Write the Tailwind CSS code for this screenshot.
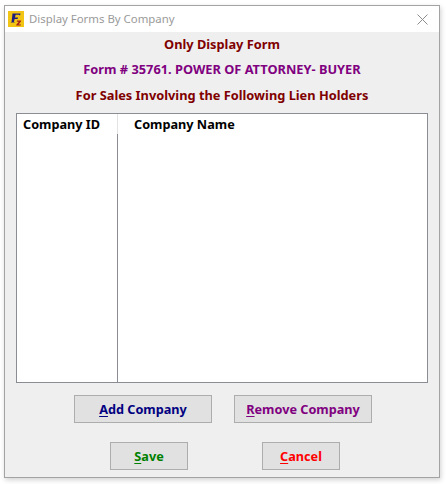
<!DOCTYPE html>
<html lang="en">
<head>
    <meta charset="UTF-8">
    <title>Display Forms By Company</title>
    <script src="https://cdn.jsdelivr.net/npm/@tailwindcss/browser@4"></script>
</head>
<body class="bg-white w-[446px] h-[484px] overflow-hidden pl-[4px] pt-[5px] font-['Noto_Sans',sans-serif]">
    <div class="w-[436px] h-[473px] border border-[#a3a3a3] bg-[#efefef] flex flex-col shadow-[1px_2px_5px_rgba(0,0,0,0.18)]">
        <!-- Title bar -->
        <div class="h-[26px] bg-white flex items-center pl-[3px] pr-[11px] shrink-0">
            <svg class="w-4 h-4 shrink-0" viewBox="0 0 16 16">
                <rect width="16" height="16" fill="#f2c414"/>
                <path d="M4.5 2.5H12.5L12 4.6L10.8 3.8H7.6L7 6.4H10L9.6 8H6.6L5.9 10.8L6.9 11.6H2.6L3.6 10.8Z" fill="#1c1c80"/>
                <path d="M9 9.6H13.2L13 10.6L10.6 13.4H13L12.6 14.6H8.2L8.4 13.6L10.9 10.8H8.8Z" fill="#a81c1c"/>
            </svg>
            <span class="ml-[5px] text-[11.4px] leading-none text-[#9a9a9a]">Display Forms By Company</span>
            <svg class="w-[11px] h-[11px] ml-auto" viewBox="0 0 11 11">
                <path d="M.5.5L10.5 10.5M10.5.5L.5 10.5" stroke="#8c8c8c" stroke-width="1" fill="none"/>
            </svg>
        </div>

        <!-- Headings -->
        <div class="flex flex-col items-center font-bold text-[12.8px] leading-[16px] pt-[4px] shrink-0">
            <h1 class="h-[25px] text-[#800000]">Only Display Form</h1>
            <h2 class="h-[26px] text-[#800080]">Form # 35761. POWER OF ATTORNEY- BUYER</h2>
            <h2 class="h-[16px] text-[#800000]">For Sales Involving the Following Lien Holders</h2>
        </div>

        <!-- List -->
        <div class="w-[412px] h-[270px] ml-[11px] mt-[10px] bg-white border border-[#8a8d94] flex flex-col shrink-0">
            <div class="flex h-[20px] shrink-0 text-[12.7px] font-bold leading-[21px] text-black">
                <div class="w-[101px] pl-[6px] border-r border-[#e3e3e3]">Company ID</div>
                <div class="pl-[16px]">Company Name</div>
            </div>
            <div class="flex-1 w-[101px] border-r border-[#8a8d94]"></div>
        </div>

        <!-- Buttons -->
        <div class="flex gap-[22px] mt-[12px] ml-[69px] shrink-0 font-bold text-[12.7px]">
            <button class="w-[138px] h-[28px] pt-[1px] bg-[#e1e1e1] border border-[#adadad] text-[#000080]"><span class="underline underline-offset-2">A</span>dd Company</button>
            <button class="w-[138px] h-[28px] pt-[1px] bg-[#e1e1e1] border border-[#adadad] text-[#800080]"><span class="underline underline-offset-2">R</span>emove Company</button>
        </div>
        <div class="flex gap-[74px] mt-[19px] ml-[105px] shrink-0 font-bold text-[12.7px]">
            <button class="w-[78px] h-[28px] pt-[1px] bg-[#e1e1e1] border border-[#adadad] text-[#008000]"><span class="underline underline-offset-2">S</span>ave</button>
            <button class="w-[78px] h-[28px] pt-[1px] bg-[#e1e1e1] border border-[#adadad] text-[#ff0000]"><span class="underline underline-offset-2">C</span>ancel</button>
        </div>
    </div>
</body>
</html>
